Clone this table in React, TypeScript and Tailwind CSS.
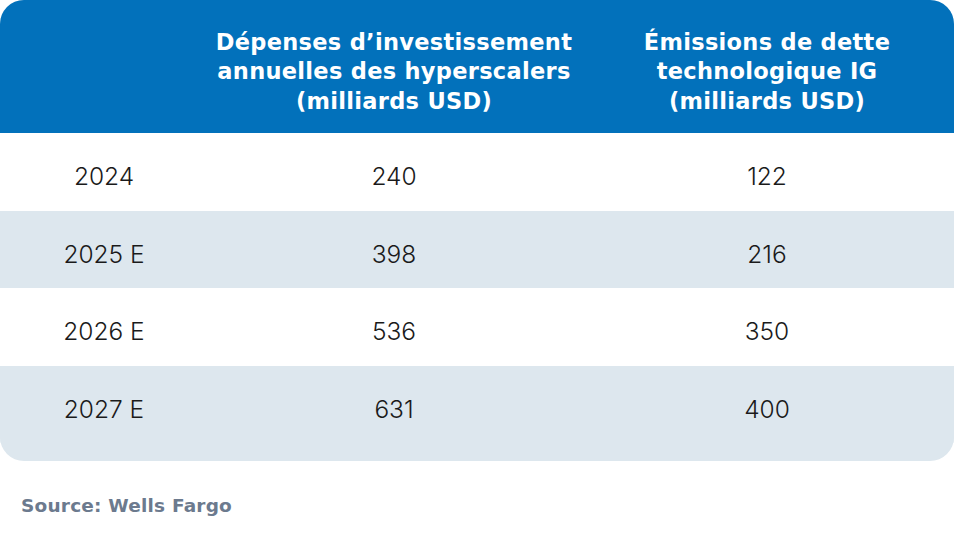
const rows = [
  { year: '2024', capex: '240', debt: '122' },
  { year: '2025 E', capex: '398', debt: '216' },
  { year: '2026 E', capex: '536', debt: '350' },
  { year: '2027 E', capex: '631', debt: '400' },
]

export default function App() {
  return (
    <div className="w-[954px] h-[549px] bg-white font-['Inter',sans-serif]">
      <div className="rounded-[24px] overflow-hidden bg-[#dde7ee] pb-[18px]">
        {/* Header */}
        <div className="flex h-[133px] bg-[#0271bb] text-white font-bold font-['DejaVu_Sans',sans-serif] text-[22.5px] leading-[29.5px] tracking-[0.3px]">
          <div className="w-[208px]" />
          <div className="w-[372px] flex items-center justify-center text-center pt-[11px]">
            Dépenses d’investissement<br />annuelles des hyperscalers<br />(milliards USD)
          </div>
          <div className="flex-1 flex items-center justify-center text-center pt-[11px]">
            Émissions de dette<br />technologique IG<br />(milliards USD)
          </div>
        </div>

        {/* Body */}
        {rows.map((r, i) => (
          <div
            key={r.year}
            className={`flex h-[77.5px] items-center pt-[10px] text-[24.5px] font-light text-[#1a1a1a] ${i % 2 === 0 ? 'bg-white' : 'bg-[#dde7ee]'}`}
          >
            <div className="w-[208px] text-center">{r.year}</div>
            <div className="w-[372px] text-center">{r.capex}</div>
            <div className="flex-1 text-center">{r.debt}</div>
          </div>
        ))}
      </div>

      <p className="mt-[31px] ml-[21px] text-[18.5px] font-bold font-['DejaVu_Sans',sans-serif] text-[#6c7a8e] tracking-[0.2px]">Source: Wells Fargo</p>
    </div>
  )
}
